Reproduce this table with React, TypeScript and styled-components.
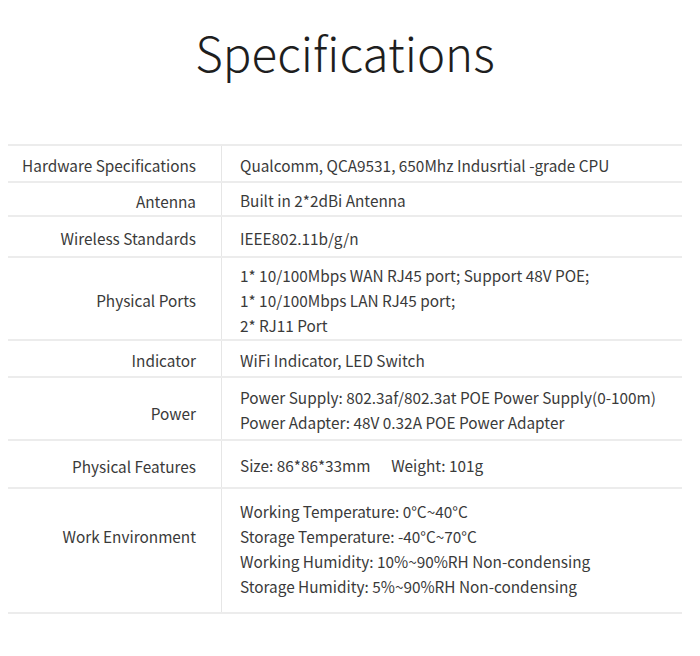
import React from "react";
import styled, { createGlobalStyle } from "styled-components";

const Global = createGlobalStyle`
  html, body { margin: 0; padding: 0; background: #ffffff; }
  body { font-family: "Noto Sans CJK SC", "Noto Sans", sans-serif; color: #333; }
`;

const Page = styled.div`
  width: 700px;
  height: 656px;
  box-sizing: border-box;
  padding: 0 18px 0 8px;
  display: flex;
  flex-direction: column;
`;

const Header = styled.div`
  height: 144px;
  display: flex;
  justify-content: center;
  align-items: flex-start;
  padding-top: 20px;
  box-sizing: border-box;
`;

const Title = styled.h1`
  margin: 0;
  font-family: "Noto Sans CJK SC", "Noto Sans", sans-serif;
  font-weight: 300;
  font-size: 47.5px;
  line-height: 64px;
  color: #1e1e1e;
  letter-spacing: 0;
`;

const Table = styled.div`
  display: flex;
  flex-direction: column;
  border-top: 2px solid #ececec;
`;

const Row = styled.div<{ $h: number }>`
  display: grid;
  grid-template-columns: 214px 1fr;
  height: ${(p) => p.$h}px;
  border-bottom: 2px solid #ececec;
  box-sizing: border-box;
`;

const Label = styled.div<{ $shift: number }>`
  display: flex;
  align-items: center;
  justify-content: flex-end;
  padding-right: 25px;
  padding-top: ${(p) => 4 + Math.max(p.$shift, 0) * 2}px;
  padding-bottom: ${(p) => Math.max(-p.$shift, 0) * 2}px;
  border-right: 1px solid #e6e6e6;
  font-size: 15.35px;
  line-height: 25px;
  color: #3a3a3a;
`;

const Value = styled.div<{ $shift: number }>`
  display: flex;
  flex-direction: column;
  justify-content: center;
  padding-left: 18px;
  padding-top: ${(p) => 3 + Math.max(p.$shift, 0) * 2}px;
  padding-bottom: ${(p) => Math.max(-p.$shift, 0) * 2}px;
  font-size: 15.35px;
  line-height: 25px;
  color: #3a3a3a;
`;

const Line = styled.span`
  display: block;
  white-space: pre;
`;

const rows: { label: string; h: number; shift?: number; vshift?: number; lines: string[] }[] = [
  { label: "Hardware Specifications", h: 37, lines: ["Qualcomm, QCA9531, 650Mhz Indusrtial -grade CPU"] },
  { label: "Antenna", h: 34, lines: ["Built in 2*2dBi Antenna"] },
  { label: "Wireless Standards", h: 41, lines: ["IEEE802.11b/g/n"] },
  {
    label: "Physical Ports",
    h: 83,
    lines: [
      "1* 10/100Mbps WAN RJ45 port; Support 48V POE;",
      "1* 10/100Mbps LAN RJ45 port;",
      "2* RJ11 Port",
    ],
  },
  { label: "Indicator", h: 37, lines: ["WiFi Indicator, LED Switch"] },
  {
    label: "Power",
    h: 63,
    shift: 3,
    lines: [
      "Power Supply: 802.3af/802.3at POE Power Supply(0-100m)",
      "Power Adapter: 48V 0.32A POE Power Adapter",
    ],
  },
  { label: "Physical Features", h: 48, lines: ["Size: 86*86*33mm      Weight: 101g"] },
  {
    label: "Work Environment",
    h: 125,
    shift: -16,
    vshift: -3,
    lines: [
      "Working Temperature: 0°C~40°C",
      "Storage Temperature: -40°C~70°C",
      "Working Humidity: 10%~90%RH Non-condensing",
      "Storage Humidity: 5%~90%RH Non-condensing",
    ],
  },
];

export default function App() {
  return (
    <>
      <Global />
      <Page>
        <Header>
          <Title>Specifications</Title>
        </Header>
        <Table>
          {rows.map((r) => (
            <Row key={r.label} $h={r.h}>
              <Label $shift={r.shift ?? 0}>{r.label}</Label>
              <Value $shift={r.vshift ?? 0}>
                {r.lines.map((l) => (
                  <Line key={l}>{l}</Line>
                ))}
              </Value>
            </Row>
          ))}
        </Table>
      </Page>
    </>
  );
}
